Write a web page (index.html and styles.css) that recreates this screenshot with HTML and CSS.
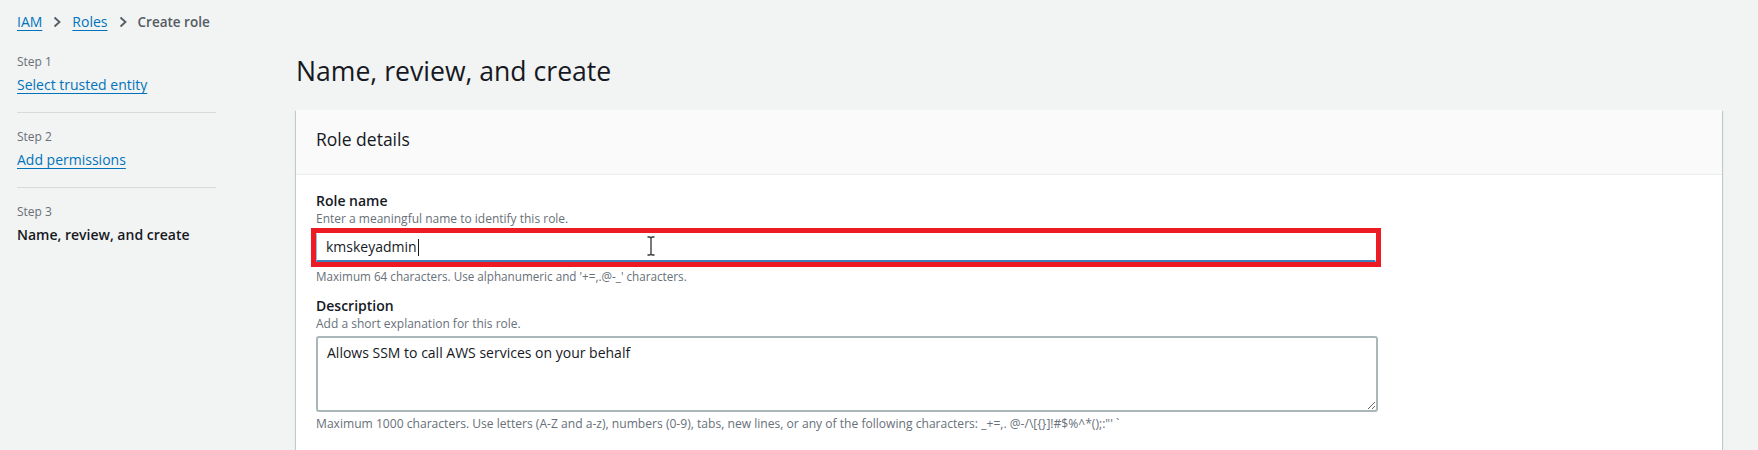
FILE: index.html
```html
<!DOCTYPE html>
<html lang="en">
<head>
<meta charset="utf-8">
<title>Create role</title>
<link rel="stylesheet" href="styles.css">
</head>
<body>
<nav class="breadcrumbs">
  <a class="crumb-link" href="#">IAM</a>
  <span class="crumb-sep"><svg width="10" height="12" viewBox="0 0 10 12"><path d="M2.5 1.5 L7.5 6 L2.5 10.5" fill="none" stroke="#545b64" stroke-width="1.8"/></svg></span>
  <a class="crumb-link" href="#">Roles</a>
  <span class="crumb-sep"><svg width="10" height="12" viewBox="0 0 10 12"><path d="M2.5 1.5 L7.5 6 L2.5 10.5" fill="none" stroke="#545b64" stroke-width="1.8"/></svg></span>
  <span class="crumb-current">Create role</span>
</nav>
<div class="layout">
  <aside class="steps">
    <div class="step">
      <div class="step-num">Step 1</div>
      <a class="step-link" href="#">Select trusted entity</a>
    </div>
    <div class="step">
      <div class="step-num">Step 2</div>
      <a class="step-link" href="#">Add permissions</a>
    </div>
    <div class="step">
      <div class="step-num">Step 3</div>
      <div class="step-active">Name, review, and create</div>
    </div>
  </aside>
  <main class="main">
    <h1 class="page-title">Name, review, and create</h1>
    <section class="card">
      <header class="card-header">Role details</header>
      <div class="card-body">
        <div class="field">
          <div class="field-label">Role name</div>
          <div class="field-desc">Enter a meaningful name to identify this role.</div>
          <div class="annot">
            <div class="input">kmskeyadmin<span class="caret"></span></div>
            <svg class="ibeam" width="10" height="20" viewBox="0 0 10 20"><path d="M1.5 1 H3.5 Q5 1 5 2.5 V17.5 Q5 19 3.5 19 H1.5 M8.5 1 H6.5 Q5 1 5 2.5 M5 17.5 Q5 19 6.5 19 H8.5" fill="none" stroke="#333" stroke-width="1.3"/></svg>
          </div>
          <div class="field-constraint">Maximum 64 characters. Use alphanumeric and '+=,.@-_' characters.</div>
        </div>
        <div class="field field-gap">
          <div class="field-label">Description</div>
          <div class="field-desc">Add a short explanation for this role.</div>
          <textarea class="textarea" readonly>Allows SSM to call AWS services on your behalf</textarea>
          <div class="field-constraint field-constraint-long">Maximum 1000 characters. Use letters (A-Z and a-z), numbers (0-9), tabs, new lines, or any of the following characters: _+=,. @-/\[{}]!#$%^*();:"' `</div>
        </div>
      </div>
    </section>
  </main>
</div>
</body>
</html>
```
FILE: styles.css
```css
html, body {
  margin: 0;
  padding: 0;
}
body {
  background: #f2f3f3;
  font-family: "Open Sans", "Noto Sans", sans-serif;
  color: #16191f;
  font-size: 14px;
  line-height: 20px;
  width: 1758px;
  height: 450px;
  overflow: hidden;
}
a {
  color: #0073bb;
}
.breadcrumbs {
  display: flex;
  align-items: center;
  gap: 8px;
  padding: 12px 17px;
  height: 20px;
}
.crumb-link {
  text-decoration: underline;
  text-underline-offset: 3px;
}
.crumb-sep {
  display: flex;
  align-items: center;
  margin: 0 2px;
}
.crumb-current {
  color: #545b64;
  font-weight: 600;
  font-size: 13.5px;
}
.layout {
  display: grid;
  grid-template-columns: 296px 1fr;
}
.steps {
  padding: 10px 0 0 17px;
}
.step {
  width: 199px;
  padding: 0 0 17px 0;
  border-bottom: 1px solid #d5dbdb;
  margin-bottom: 16px;
}
.step:last-child {
  border-bottom: none;
}
.step-num {
  font-size: 12px;
  line-height: 16px;
  color: #687078;
  margin-bottom: 5px;
}
.step-link {
  display: block;
  text-decoration: underline;
  text-underline-offset: 3px;
}
.step-active {
  font-weight: 600;
  color: #16191f;
}
.main {
  padding: 9px 36px 0 0;
}
.page-title {
  margin: 0 0 21px 0;
  font-size: 26.6px;
  line-height: 36px;
  font-weight: 400;
  color: #16191f;
}
.card {
  background: #ffffff;
  box-shadow: 0 1px 1px 0 rgba(0, 28, 36, 0.3), 1px 1px 1px 0 rgba(0, 28, 36, 0.15), -1px 1px 1px 0 rgba(0, 28, 36, 0.15);
}
.card-header {
  background: #fafafa;
  border-bottom: 1px solid #eaeded;
  padding: 17px 20px 23px;
  font-size: 17.5px;
  line-height: 24px;
  color: #16191f;
}
.card-body {
  padding: 16px 20px 20px;
}
.field-label {
  font-weight: 600;
  font-size: 14px;
  line-height: 20px;
}
.field-desc {
  font-size: 12px;
  line-height: 16px;
  color: #687078;
  margin-bottom: 1px;
}
.annot {
  position: relative;
  width: 1060px;
  margin-left: -5px;
  border: 5px solid #ed1c24;
}
.input {
  height: 26px;
  border: 1px solid #8cc3e6;
  border-bottom: 2px solid #3f80bd;
  border-top-color: #ffffff;
  border-right-color: #ffffff;
  padding: 0 9px;
  font-size: 14px;
  line-height: 26px;
  color: #16191f;
  display: flex;
  align-items: center;
}
.caret {
  display: inline-block;
  width: 1px;
  height: 17px;
  background: #16191f;
  margin-left: 1px;
}
.ibeam {
  position: absolute;
  left: 330px;
  top: 3px;
}
.field-constraint {
  font-size: 11.7px;
  line-height: 16px;
  color: #687078;
  margin-top: 1px;
}
.field-constraint-long {
  font-size: 12.1px;
}
.field-gap {
  margin-top: 12px;
}
.textarea {
  display: block;
  box-sizing: border-box;
  width: 1062px;
  height: 76px;
  margin: 4px 0 4px 0;
  padding: 5px 9px;
  border: 2px solid #aab7b8;
  border-radius: 3px;
  font-family: "Open Sans", "Noto Sans", sans-serif;
  font-size: 14px;
  line-height: 20px;
  color: #16191f;
  background: #ffffff;
  resize: vertical;
  outline: none;
}
```
